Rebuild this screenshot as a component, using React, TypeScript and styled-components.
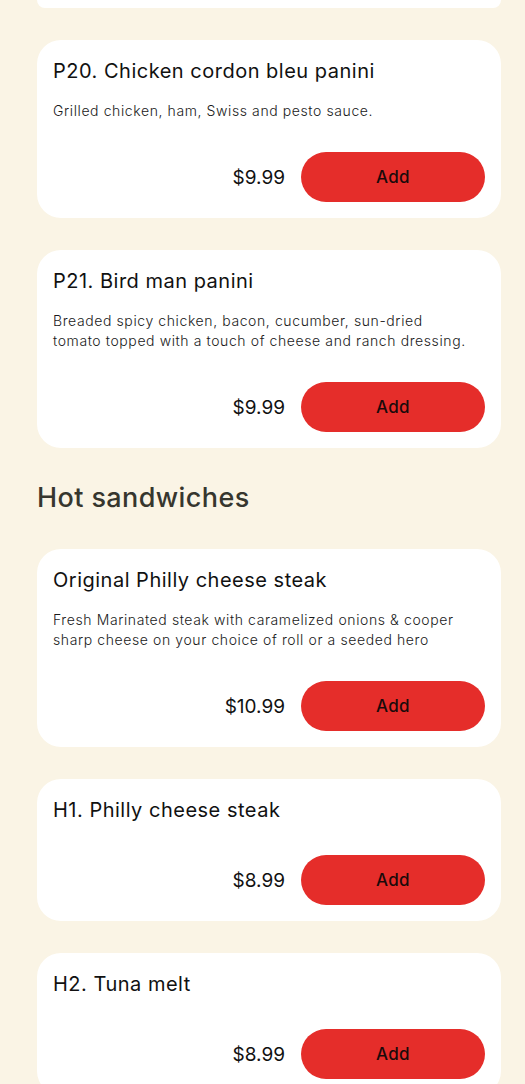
import styled, { createGlobalStyle } from "styled-components";

const GlobalStyle = createGlobalStyle`
	html, body {
		margin: 0;
		padding: 0;
		background: #faf4e5;
		font-family: Inter, "Noto Sans", sans-serif;
		color: #111;
		overflow: hidden;
	}
`;

const Page = styled.div`
	padding: 0 24px 0 37px;
	height: 1084px;
	overflow: hidden;
`;

const Section = styled.section`
	display: flex;
	flex-direction: column;
	gap: 32px;
`;

// bottom edge of the previous card, scrolled mostly out of view
const CardTail = styled.div`
	height: 8px;
	background: #fff;
	border-radius: 0 0 24px 24px;
`;

const SectionTitle = styled.h2`
	margin: 34px 0 35px;
	font-size: 27px;
	line-height: 32px;
	font-weight: 500;
	color: #36362e;
	letter-spacing: 0.4px;
`;

const Card = styled.div`
	background: #fff;
	border-radius: 24px;
	padding: 16px;
	display: flex;
	flex-direction: column;
`;

const Title = styled.h3<{ $hasDesc: boolean }>`
	margin: 0 0 ${(p) => (p.$hasDesc ? "15px" : "30px")};
	font-size: 20px;
	line-height: 30px;
	font-weight: 400;
	letter-spacing: 0.5px;
	color: #111;
`;

const Desc = styled.p`
	margin: 0 0 31px;
	padding-right: 12px;
	font-size: 14px;
	line-height: 20px;
	font-weight: 300;
	letter-spacing: 0.6px;
	color: #1a1a1a;
`;

const Footer = styled.div`
	display: flex;
	justify-content: flex-end;
	align-items: center;
	gap: 16px;
`;

const Price = styled.span`
	font-size: 19px;
	color: #111;
`;

const AddButton = styled.button`
	width: 184px;
	height: 50px;
	border: none;
	border-radius: 25px;
	background: #e52d2a;
	color: #1a0a0a;
	font-family: inherit;
	font-size: 17px;
	font-weight: 500;
	letter-spacing: 0.3px;
	cursor: pointer;
`;

type Item = { name: string; desc?: string; price: string };

const panini: Item[] = [
	{
		name: "P20. Chicken cordon bleu panini",
		desc: "Grilled chicken, ham, Swiss and pesto sauce.",
		price: "$9.99",
	},
	{
		name: "P21. Bird man panini",
		desc: "Breaded spicy chicken, bacon, cucumber, sun-dried tomato topped with a touch of cheese and ranch dressing.",
		price: "$9.99",
	},
];

const hot: Item[] = [
	{
		name: "Original Philly cheese steak",
		desc: "Fresh Marinated steak with caramelized onions & cooper sharp cheese on your choice of roll or a seeded hero",
		price: "$10.99",
	},
	{ name: "H1. Philly cheese steak", price: "$8.99" },
	{ name: "H2. Tuna melt", price: "$8.99" },
];

const MenuCard = ({ item }: { item: Item }) => (
	<Card>
		<Title $hasDesc={!!item.desc}>{item.name}</Title>
		{item.desc && <Desc>{item.desc}</Desc>}
		<Footer>
			<Price>{item.price}</Price>
			<AddButton>Add</AddButton>
		</Footer>
	</Card>
);

export default function App() {
	return (
		<>
			<GlobalStyle />
			<Page>
				<Section>
					<CardTail />
					{panini.map((item) => (
						<MenuCard key={item.name} item={item} />
					))}
				</Section>
				<SectionTitle>Hot sandwiches</SectionTitle>
				<Section>
					{hot.map((item) => (
						<MenuCard key={item.name} item={item} />
					))}
				</Section>
			</Page>
		</>
	);
}
